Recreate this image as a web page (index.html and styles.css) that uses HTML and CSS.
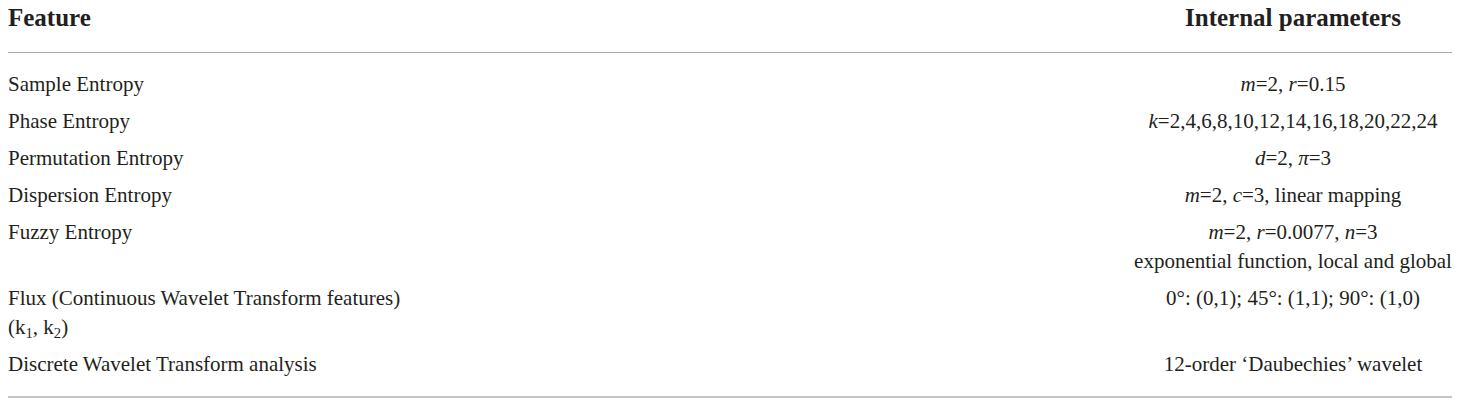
FILE: index.html
```html
<!DOCTYPE html>
<html lang="en">

<head>
    <meta charset="utf-8">
    <link rel="stylesheet" href="styles.css">
</head>

<body>
    <table class="param-table">
        <thead>
            <tr>
                <th class="col-feature">Feature</th>
                <th class="col-params">Internal parameters</th>
            </tr>
        </thead>
        <tbody>
            <tr>
                <td>Sample Entropy</td>
                <td class="col-params"><i>m</i>=2, <i>r</i>=0.15</td>
            </tr>
            <tr>
                <td>Phase Entropy</td>
                <td class="col-params"><i>k</i>=2,4,6,8,10,12,14,16,18,20,22,24</td>
            </tr>
            <tr>
                <td>Permutation Entropy</td>
                <td class="col-params"><i>d</i>=2, <i>π</i>=3</td>
            </tr>
            <tr>
                <td>Dispersion Entropy</td>
                <td class="col-params"><i>m</i>=2, <i>c</i>=3, linear mapping</td>
            </tr>
            <tr>
                <td>Fuzzy Entropy</td>
                <td class="col-params"><i>m</i>=2, <i>r</i>=0.0077, <i>n</i>=3<br>exponential function, local and global</td>
            </tr>
            <tr>
                <td>Flux (Continuous Wavelet Transform features)<br>(k<sub>1</sub>, k<sub>2</sub>)</td>
                <td class="col-params">0°: (0,1); 45°: (1,1); 90°: (1,0)</td>
            </tr>
            <tr>
                <td>Discrete Wavelet Transform analysis</td>
                <td class="col-params">12-order ‘Daubechies’ wavelet</td>
            </tr>
        </tbody>
    </table>
</body>

</html>
```

FILE: styles.css
```css
body {
    margin: 0 8px;
    background: #ffffff;
    color: #231f20;
    font-family: "Liberation Serif", "Times New Roman", serif;
}

.param-table {
    width: 100%;
    border-collapse: collapse;
    border-bottom: 2px solid #c4c4c4;
}

.param-table th {
    font-size: 25px;
    font-weight: bold;
    line-height: 29px;
    padding: 3px 0 20px 0;
    border-bottom: 1px solid #a9a9a9;
    text-align: left;
}

.param-table td {
    font-size: 21px;
    line-height: 29px;
    padding: 4px 0;
    vertical-align: top;
    text-align: left;
}

/* extra air under the header rule and above the closing rule */
.param-table tbody tr:first-child td {
    padding-top: 17px;
}

.param-table tbody tr:last-child td {
    padding-bottom: 17px;
}

.param-table .col-params {
    width: 318px;
    text-align: center;
}

.param-table sub {
    font-size: 0.7em;
    line-height: 0;
    vertical-align: -0.25em;
}
```
